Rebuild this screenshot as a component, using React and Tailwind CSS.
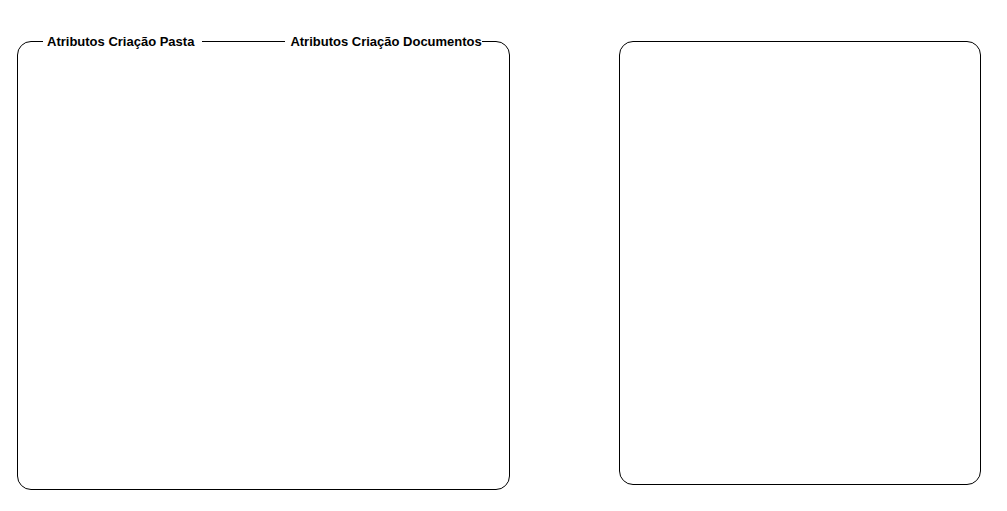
import React from "react";

function App() {
  return (
    <div
      className="flex items-start gap-[109px] pl-[17px] pt-[34px] bg-white min-h-screen text-black"
      style={{ fontFamily: '"Liberation Sans", Arial, sans-serif' }}
    >

      <fieldset className="w-[493px] border border-black rounded-[14px]">
        <legend className="ml-[25px] flex items-center text-[13px] leading-[15px] font-bold">
          <span className="pl-[4px] pr-[8px]">Atributos Criação Pasta</span>
          <span className="w-[83px] h-px bg-black"></span>
          <span className="pl-[5px]">Atributos Criação Documentos</span>
        </legend>
        <div className="h-[440px]"></div>
      </fieldset>

      <div className="mt-[7px] w-[362px] h-[444px] border border-black rounded-[14px]"></div>

    </div>
  );
}

export default App;
